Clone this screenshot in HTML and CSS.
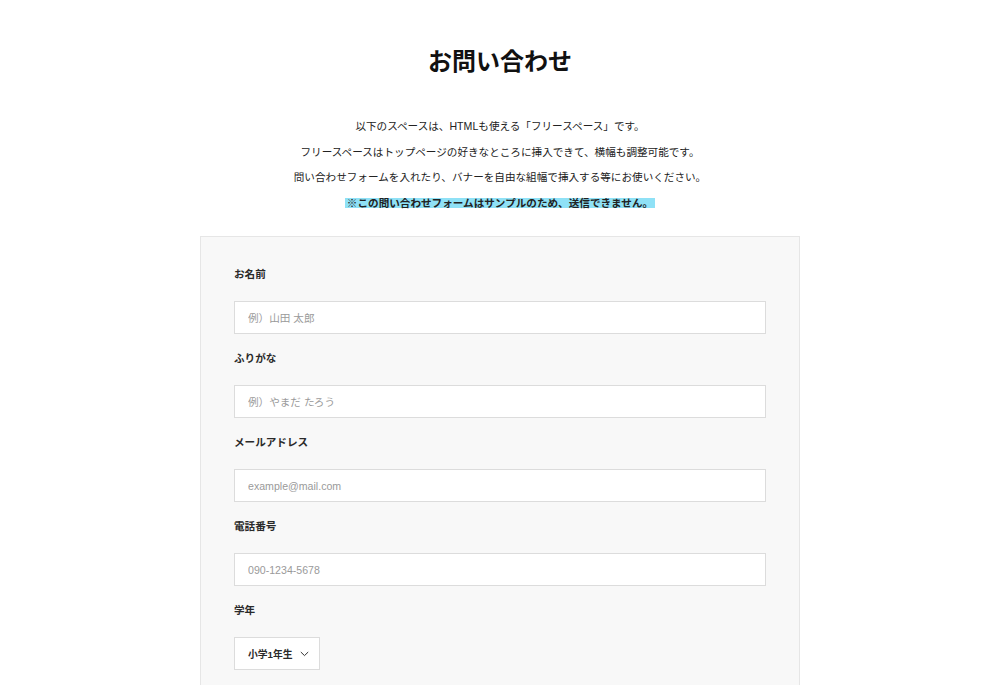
FILE: index.html
```html
<!DOCTYPE html>
<html lang="ja">

<head>
  <meta charset="UTF-8">
  <meta name="viewport" content="width=device-width, initial-scale=1.0">
  <title>お問い合わせ</title>
  <link rel="stylesheet" href="styles.css">
</head>

<body>
  <div class="page">
    <h1 class="title">お問い合わせ</h1>

    <div class="intro">
      <p>以下のスペースは、HTMLも使える「フリースペース」です。</p>
      <p>フリースペースはトップページの好きなところに挿入できて、横幅も調整可能です。</p>
      <p>問い合わせフォームを入れたり、バナーを自由な組幅で挿入する等にお使いください。</p>
      <p><span class="marker">※この問い合わせフォームはサンプルのため、送信できません。</span></p>
    </div>

    <form class="form" onsubmit="return false">
      <div class="field">
        <label class="label">お名前</label>
        <input type="text" class="input" placeholder="例）山田 太郎">
      </div>
      <div class="field">
        <label class="label">ふりがな</label>
        <input type="text" class="input" placeholder="例）やまだ たろう">
      </div>
      <div class="field">
        <label class="label">メールアドレス</label>
        <input type="text" class="input" placeholder="example@mail.com">
      </div>
      <div class="field">
        <label class="label">電話番号</label>
        <input type="text" class="input" placeholder="090-1234-5678">
      </div>
      <div class="field">
        <label class="label">学年</label>
        <div class="select">
          <span>小学1年生</span>
          <svg width="9" height="6" viewBox="0 0 9 6"><path d="M0.8 1 L4.5 4.6 L8.2 1" fill="none" stroke="#333" stroke-width="1"/></svg>
        </div>
      </div>
    </form>
  </div>
</body>

</html>
```

FILE: styles.css
```css
html {
  background: #fff;
}

body {
  margin: 0;
  color: #222;
  font-family: "Liberation Sans", "Noto Sans CJK JP", sans-serif;
}

.page {
  padding-top: 44px;
}

.title {
  margin: 0;
  text-align: center;
  font-size: 24px;
  line-height: 36px;
  font-weight: bold;
  color: #111;
}

.intro {
  margin-top: 34px;
  text-align: center;
}

.intro p {
  margin: 0;
  font-size: 10.6px;
  line-height: 25.5px;
}

.marker {
  font-weight: bold;
  padding: 0 2px;
  background: linear-gradient(transparent 12%, #8fe1f6 12%, #8fe1f6 92%, transparent 92%);
}

.form {
  width: 600px;
  box-sizing: border-box;
  margin: 20px auto 40px;
  padding: 27px 33px 60px;
  background: #f8f8f8;
  border: 1px solid #e6e6e6;
}

.field {
  margin-bottom: 14px;
}

.label {
  display: block;
  font-size: 10.6px;
  line-height: 20px;
  font-weight: bold;
  color: #2a2a2a;
  margin-bottom: 17px;
}

.input {
  display: block;
  width: 100%;
  height: 33px;
  box-sizing: border-box;
  border: 1px solid #dcdcdc;
  background: #fff;
  padding: 0 13px;
  font-size: 10.6px;
  font-family: "Liberation Sans", "Noto Sans CJK JP", sans-serif;
  color: #222;
  outline: none;
}

.input::placeholder {
  color: #9a9a9a;
}

.select {
  display: inline-flex;
  align-items: center;
  gap: 7px;
  height: 33px;
  box-sizing: border-box;
  padding: 0 10px 0 13px;
  border: 1px solid #dcdcdc;
  background: #fff;
  font-size: 9.8px;
  font-weight: bold;
  color: #2a2a2a;
}
```
